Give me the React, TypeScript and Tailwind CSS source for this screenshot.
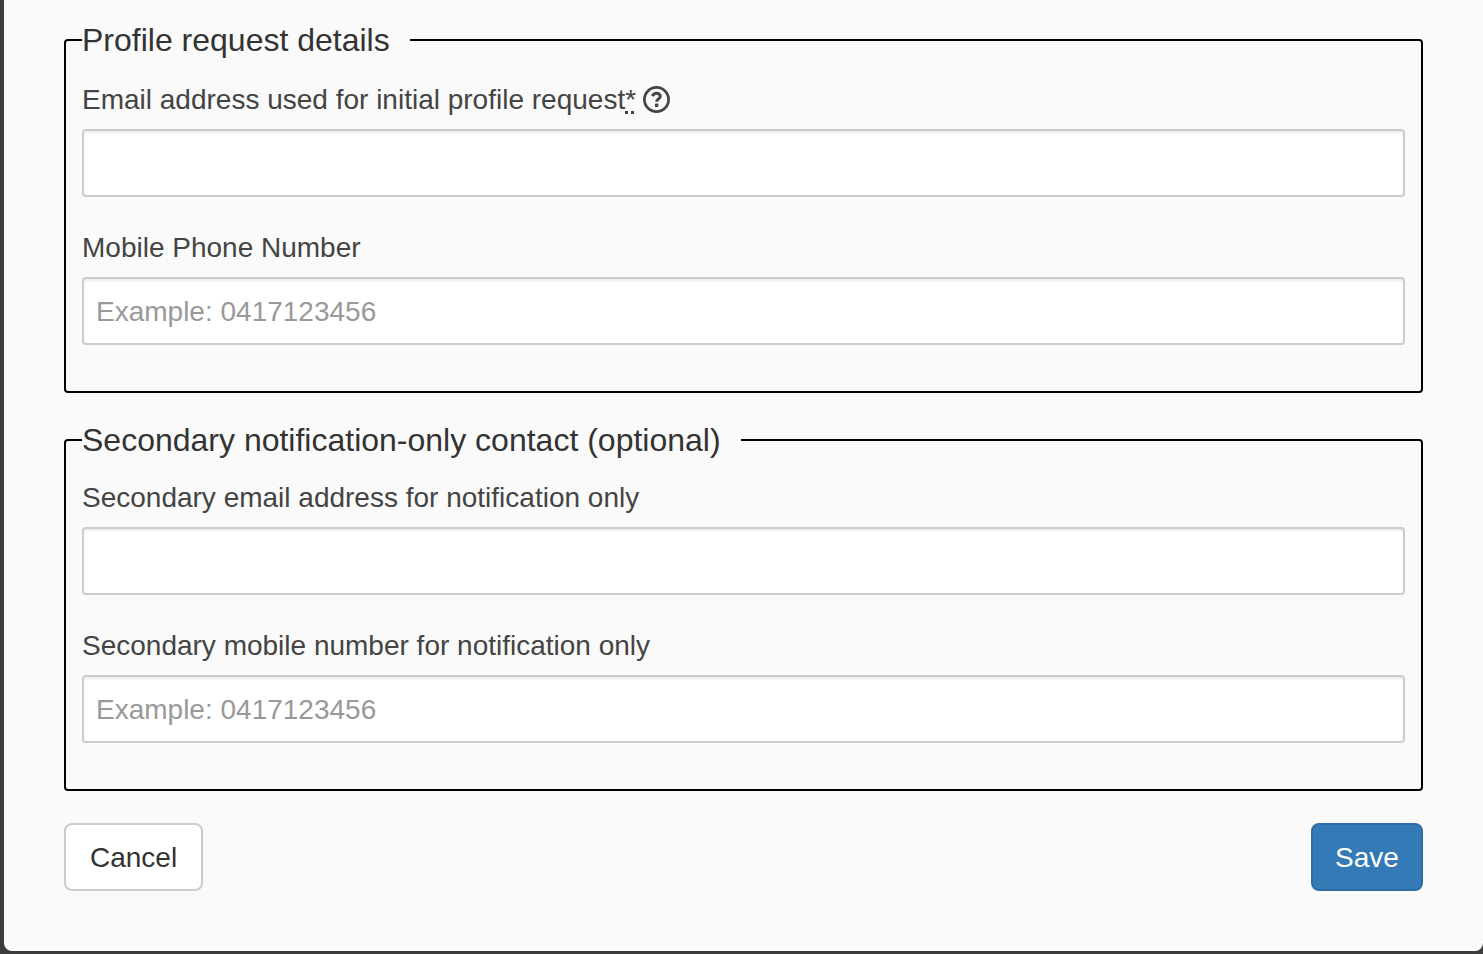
import { useState, type ReactNode } from "react";

type FieldProps = {
  id: string;
  label: string;
  type: string;
  placeholder?: string;
  required?: boolean;
  help?: string;
};

function HelpIcon() {
  return (
    <svg viewBox="0 0 27 27" className="size-[27px]" aria-hidden="true">
      <circle cx="13.5" cy="13.5" r="12.1" fill="none" stroke="currentColor" strokeWidth="2.7" />
      <path
        d="M9.4 10.1C10.2 8.2 11.6 7.2 13.5 7.2c2.2 0 3.8 1.3 3.8 3.1 0 2.8-3.7 2.6-3.7 5.5"
        fill="none"
        stroke="currentColor"
        strokeWidth="3"
      />
      <rect x="11.9" y="17.6" width="3.4" height="3.4" rx="0.8" fill="currentColor" />
    </svg>
  );
}

function Field({ id, label, type, placeholder, required, help }: FieldProps) {
  const [value, setValue] = useState("");
  return (
    <div className="mb-[30px]">
      <div className={help ? "mb-2 flex h-11 items-end gap-[7px]" : "mb-2 flex"}>
        <label htmlFor={id} className="text-[28px] leading-[42px] text-[#444]">
          {label}
          {required && (
            <abbr title="required" className="underline decoration-dotted decoration-[3px] underline-offset-2">
              *
            </abbr>
          )}
        </label>
        {help && (
          <button type="button" aria-label={help} className="flex h-11 items-center text-[#444]">
            <HelpIcon />
          </button>
        )}
      </div>
      <input
        id={id}
        type={type}
        value={value}
        required={required}
        placeholder={placeholder}
        onChange={(event) => setValue(event.target.value)}
        className="block h-[68px] w-full rounded-[4px] border-2 border-[#ccc] bg-white px-3 pt-0.5 text-[28px] text-[#555] shadow-[inset_0_2px_2px_rgba(0,0,0,0.075)] placeholder:text-[#999]"
      />
    </div>
  );
}

function Group({ title, children }: { title: string; children: ReactNode }) {
  return (
    <fieldset className="min-w-0 rounded-[4px] border-2 border-black px-4 pt-[14px] pb-4">
      <legend className="pr-5 text-[32px] leading-[46px] text-[#333]">{title}</legend>
      {children}
    </fieldset>
  );
}

export default function App() {
  return (
    <div className="min-h-screen bg-[#3e3b3b] pl-1 font-['Helvetica_Neue','Liberation_Sans',Arial,sans-serif]">
      <form
        className="rounded-b-[8px] bg-[#fafafa] px-[60px] pt-[17px] pb-[60px]"
        onSubmit={(event) => event.preventDefault()}
      >
        <div className="flex flex-col gap-6">
          <Group title="Profile request details">
            <Field
              id="email"
              label="Email address used for initial profile request"
              type="email"
              required
              help="Help"
            />
            <Field id="mobile" label="Mobile Phone Number" type="tel" placeholder="Example: 0417123456" />
          </Group>
          <Group title="Secondary notification-only contact (optional)">
            <Field id="secondary-email" label="Secondary email address for notification only" type="email" />
            <Field
              id="secondary-mobile"
              label="Secondary mobile number for notification only"
              type="tel"
              placeholder="Example: 0417123456"
            />
          </Group>
        </div>
        <div className="mt-8 flex justify-between">
          <button
            type="button"
            className="h-[68px] rounded-[8px] border-2 border-[#ccc] bg-white px-6 pt-0.5 text-[28px] text-[#333]"
          >
            Cancel
          </button>
          <button
            type="submit"
            className="h-[68px] w-28 rounded-[8px] border-2 border-[#2e6da4] bg-[#337ab7] pt-0.5 text-[28px] text-white"
          >
            Save
          </button>
        </div>
      </form>
    </div>
  );
}
